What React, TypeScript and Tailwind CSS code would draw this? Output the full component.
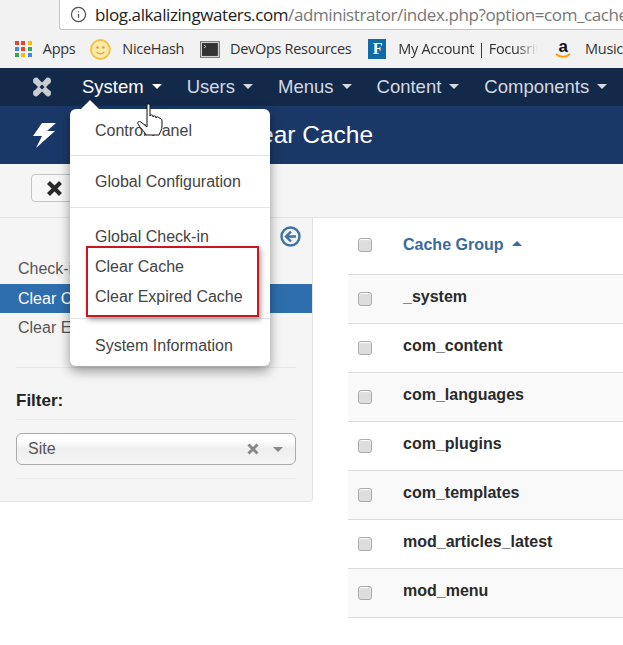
import { ArrowLeft, ArrowRight, Info, RotateCw } from 'lucide-react';

const navItems = ['System', 'Users', 'Menus', 'Content', 'Components'];
const rows = ['_system', 'com_content', 'com_languages', 'com_plugins', 'com_templates', 'mod_articles_latest', 'mod_menu'];
const appDots = ['bg-[#ea4335]', 'bg-[#ea4335]', 'bg-[#fbbc05]', 'bg-[#4285f4]', 'bg-[#ea4335]', 'bg-[#34a853]', 'bg-[#34a853]', 'bg-[#fbbc05]', 'bg-[#4285f4]'];

function Caret({ className }: { className: string }) {
  return <span className={`inline-block h-0 w-0 border-x-[5px] border-t-[5px] border-x-transparent ${className}`} />;
}

function Checkbox() {
  return <span className="block h-[14px] w-[14px] rounded-[3px] border border-[#aaa] bg-[#ddd] shadow-[inset_0_1px_1px_#fff]" />;
}

function BrowserChrome() {
  return (
    <div className="h-[68px] bg-[#f2f2f2] font-['Open_Sans',sans-serif]">
      <div className="flex h-[30px] items-center">
        <ArrowLeft className="ml-[14px] size-[19px] text-[#5f6368]" strokeWidth={2.2} />
        <ArrowRight className="ml-[16px] size-[19px] text-[#c4c4c4]" strokeWidth={2.2} />
        <RotateCw className="ml-[16px] size-[18px] text-[#5f6368]" strokeWidth={2.4} />
        <div className="ml-[13px] flex h-[30px] flex-1 items-center rounded-bl-[3px] border-b border-l border-[#c4c4c4] bg-white pl-[10px]">
          <Info className="size-[17px] text-[#555]" strokeWidth={1.8} />
          <span className="ml-[8px] whitespace-nowrap text-[17px] tracking-[-0.4px] text-[#222]">
            blog.alkalizingwaters.com<span className="text-[#777]">/administrator/index.php?option=com_cache</span>
          </span>
        </div>
      </div>
      <div className="flex h-[38px] items-center whitespace-nowrap text-[14.5px] tracking-[-0.3px] text-[#333]">
        <div className="ml-[15px] grid size-[17px] grid-cols-3 gap-[2px]">
          {appDots.map((c, i) => (
            <span key={i} className={`block size-[4px] ${c}`} />
          ))}
        </div>
        <span className="ml-[11px]">Apps</span>
        <svg className="ml-[15px]" width="21" height="21" viewBox="0 0 21 21">
          <circle cx="10.5" cy="10.5" r="9.5" fill="#fde9a6" stroke="#f1c24b" strokeWidth="2" />
          <circle cx="7.5" cy="8.5" r="1.3" fill="#caa24a" />
          <circle cx="13.5" cy="8.5" r="1.3" fill="#caa24a" />
          <path d="M6.5 13c2 2.5 6 2.5 8 0" fill="none" stroke="#caa24a" strokeWidth="1.2" />
        </svg>
        <span className="ml-[11px]">NiceHash</span>
        <svg className="ml-[16px]" width="20" height="17" viewBox="0 0 20 17">
          <rect x="0.5" y="0.5" width="19" height="16" fill="#d8d8d8" stroke="#777" />
          <rect x="2" y="2" width="16" height="13" fill="#333" />
          <path d="M4 4l2 1.5L4 7" fill="none" stroke="#ddd" strokeWidth="0.8" />
        </svg>
        <span className="ml-[10px]">DevOps Resources</span>
        <span className="ml-[17px] flex h-[20px] w-[18px] items-center justify-center bg-[#0f6aa5] font-['Liberation_Serif',serif] text-[16px] font-bold text-white">
          F
        </span>
        <span className="ml-[12px] w-[141px] overflow-hidden [mask-image:linear-gradient(to_right,#000_85%,transparent)]">My Account | Focusrite</span>
        <svg className="ml-[16px]" width="18" height="21" viewBox="0 0 18 21">
          <text x="9" y="13" textAnchor="middle" fontSize="17" fontWeight="700" fontFamily="Liberation Sans" fill="#111">a</text>
          <path d="M2 15c4 4 10 4 14 0" fill="none" stroke="#f90" strokeWidth="1.8" />
        </svg>
        <span className="ml-[13px]">Music</span>
      </div>
    </div>
  );
}

function Navbar() {
  return (
    <nav className="flex h-[38px] items-center bg-[#13294a] pb-[1px]">
      <svg className="ml-[31px]" width="22" height="22" viewBox="0 0 22 22" fill="#c9ccd2">
        <path d="M2 5a3 3 0 0 1 5.5-2L11 6.500 14.500 3A3 3 0 0 1 20 5a3 3 0 0 1-2 3L15 11l3 3a3 3 0 0 1 2 3 3 3 0 0 1-5.500 2L11 15.500 7.500 19A3 3 0 0 1 2 17a3 3 0 0 1 2-3l3-3-3-3a3 3 0 0 1-2-3z" />
        <path d="M11 8.500L13.500 11 11 13.500 8.500 11z" fill="#13294a" />
      </svg>
      <div className="ml-[29px] flex items-center gap-[25px] whitespace-nowrap text-[18.5px]">
        {navItems.map((item, i) => (
          <div key={item} className={`flex items-center gap-[8px] ${i === 0 ? 'text-white' : 'text-[#d5d9e0]'}`}>
            <span>{item}</span>
            <Caret className={i === 0 ? 'border-t-white' : 'border-t-[#d5d9e0]'} />
          </div>
        ))}
      </div>
    </nav>
  );
}

function TitleBar() {
  return (
    <div className="flex h-[58px] items-center whitespace-nowrap bg-[#1a3867] text-white">
      <svg className="ml-[31px]" width="27" height="27" viewBox="0 0 27 27" fill="#fff">
        <path d="M11 1h14l-9 8h8L5 26l6-12H2z" />
      </svg>
      <h1 className="ml-[25px] text-[24.5px] leading-none">Maintenance: Clear Cache</h1>
    </div>
  );
}

function Toolbar() {
  return (
    <div className="flex h-[54px] items-center border-b border-[#e3e3e3] bg-[#f5f5f5] pb-[5px] pl-[31px]">
      <button className="flex h-[28px] w-[90px] items-center rounded-[4px] border border-[#c4c4c4] bg-[#f7f7f7] pl-[14px] text-[14px] text-[#333]">
        <svg width="17" height="17" viewBox="0 0 17 17" fill="none" stroke="#2a2a2a" strokeWidth="4.200">
          <path d="M2.500 2.500l12 12M14.500 2.500l-12 12" />
        </svg>
        <span className="ml-[8px]">Delete</span>
      </button>
    </div>
  );
}

function Sidebar() {
  return (
    <aside className="h-[284px] w-[313px] shrink-0 rounded-br-[4px] border-r border-b border-[#e3e3e3] bg-[#f5f5f5] text-[16px] text-[#555]">
      <div className="flex h-[36px] items-start justify-end pt-[8px] pr-[11px]">
        <svg width="21" height="21" viewBox="0 0 21 21" fill="none" stroke="#3f73a8" strokeWidth="2.400">
          <circle cx="10.500" cy="10.500" r="9" />
          <path d="M11 5.500l-5 5 5 5M6.500 10.500H16" />
        </svg>
      </div>
      <div className="flex h-[30px] items-center pl-[18px]">Check-in</div>
      <div className="flex h-[29px] items-center bg-[#2f6ead] pl-[18px] text-white">Clear Cache</div>
      <div className="flex h-[30px] items-center pl-[18px]">Clear Expired Cache</div>
      <div className="ml-[16px] mr-[16px] mt-[24px] border-t border-[#e8e8e8] pt-[22px]">
        <div className="border-b border-[#ececec] pb-[7px] text-[17px] font-bold leading-[22px] text-[#222]">Filter:</div>
        <div className="mt-[13px] flex h-[32px] items-center rounded-[6px] border border-[#aaa] bg-[linear-gradient(#fff_20%,#eee_50%,#f6f6f6)] pl-[11px] text-[16px] text-[#555]">
          <span className="flex-1">Site</span>
          <svg width="12" height="12" viewBox="0 0 12 12" fill="none" stroke="#888" strokeWidth="3">
            <path d="M1.500 1.500l9 9M10.500 1.500l-9 9" />
          </svg>
          <Caret className="ml-[14px] mr-[12px] border-t-[#888]" />
        </div>
        <div className="mt-[13px] border-t border-[#ececec]" />
      </div>
    </aside>
  );
}

function CacheTable() {
  return (
    <div className="flex-1 pl-[35px]">
      <div className="flex h-[57px] items-center border-b border-[#ddd] pb-[2px] pl-[10px]">
        <Checkbox />
        <span className="ml-[31px] text-[16px] font-bold text-[#3b6a9c]">Cache Group</span>
        <span className="ml-[9px] mb-[3px] h-0 w-0 border-x-[5px] border-b-[5px] border-x-transparent border-b-[#3b6a9c]" />
      </div>
      {rows.map((row, i) => (
        <div key={row} className={`flex h-[49px] items-center border-b border-[#ddd] pl-[10px] ${i % 2 === 0 ? 'bg-[#f9f9f9]' : 'bg-white'}`}>
          <Checkbox />
          <span className="mb-[5px] ml-[31px] text-[16px] font-bold text-[#2a2a2a]">{row}</span>
        </div>
      ))}
    </div>
  );
}

function SystemMenu() {
  return (
    <div className="absolute top-[109px] left-[70px] w-[200px] rounded-[6px] bg-white text-[16px] text-[#444] shadow-[0_5px_12px_rgba(0,0,0,0.4)]">
      <span className="absolute -top-[9px] left-[11px] h-0 w-0 border-x-[9px] border-b-[9px] border-x-transparent border-b-white" />
      <div className="h-[47px] border-b border-[#e5e5e5] pt-[9px] pl-[25px] leading-[25px]">Control Panel</div>
      <div className="h-[52px] border-b border-[#e5e5e5] pt-[13px] pl-[25px] leading-[25px]">Global Configuration</div>
      <div className="h-[111px] border-b border-[#e5e5e5] pt-[14px] pl-[25px] leading-[30px]">
        <div>Global Check-in</div>
        <div>Clear Cache</div>
        <div>Clear Expired Cache</div>
      </div>
      <div className="h-[47px] pt-[14px] pl-[25px] leading-[25px]">System Information</div>
    </div>
  );
}

export default function App() {
  return (
    <div className="relative h-[645px] w-[623px] overflow-hidden bg-white font-['Liberation_Sans',sans-serif]">
      <BrowserChrome />
      <Navbar />
      <TitleBar />
      <Toolbar />
      <div className="flex">
        <Sidebar />
        <CacheTable />
      </div>
      <SystemMenu />
      <div className="absolute top-[246px] left-[86px] h-[71px] w-[173px] border-2 border-[#c9171e] shadow-[2px_3px_5px_rgba(0,0,0,0.35)]" />
      <svg className="absolute top-[103px] left-[137px]" width="28" height="34" viewBox="0 0 28 34" fill="#fff" stroke="#111" strokeWidth="1">
        <path d="M10 2c0-1.500 3-1.500 3 0v11c0-1.500 3-1.500 3 0v1c0-1.500 3-1.500 3 0v1c0-1.500 3-1.500 3 0 1 0 3 .5 3 3v5c0 4-2 6-3 9H9c-1-3-5-6-8-11-1-2 1-3 3-2l6 5z" />
      </svg>
    </div>
  );
}
